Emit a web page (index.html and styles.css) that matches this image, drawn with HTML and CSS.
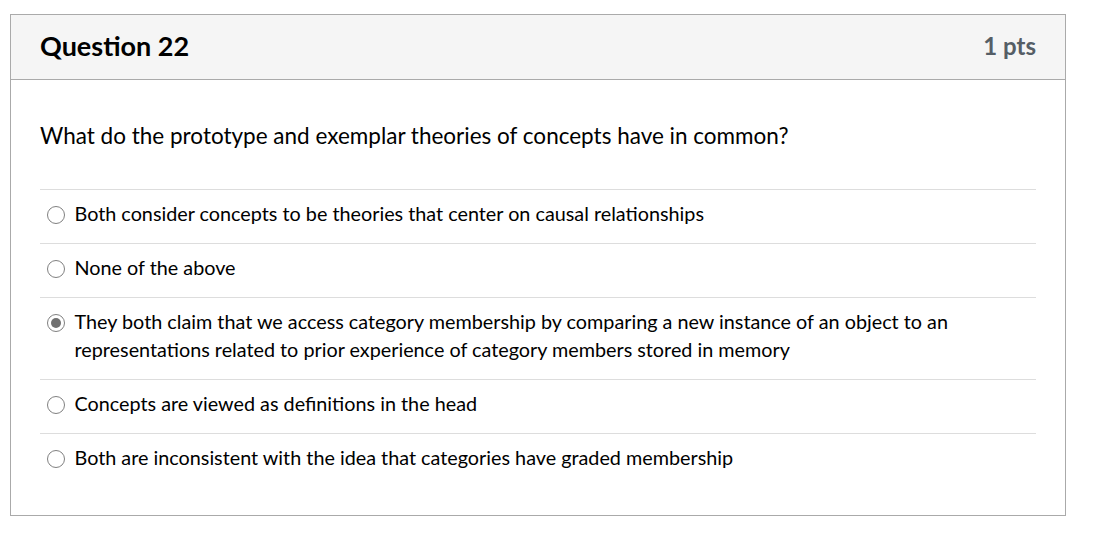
FILE: index.html
```html
<!DOCTYPE html>
<html>
<head>
<meta charset="utf-8">
<link rel="stylesheet" href="styles.css">
</head>
<body>
<div class="question">
  <div class="q-header">
    <div class="q-title">Question 22</div>
    <div class="q-pts">1 pts</div>
  </div>
  <div class="q-body">
    <div class="q-text">What do the prototype and exemplar theories of concepts have in common?</div>
    <div class="answers">
      <div class="answer"><span class="radio"></span><span class="label">Both consider concepts to be theories that center on causal relationships</span></div>
      <div class="answer"><span class="radio"></span><span class="label">None of the above</span></div>
      <div class="answer"><span class="radio checked"></span><span class="label">They both claim that we access category membership by comparing a new instance of an object to an representations related to prior experience of category members stored in memory</span></div>
      <div class="answer"><span class="radio"></span><span class="label">Concepts are viewed as definitions in the head</span></div>
      <div class="answer"><span class="radio"></span><span class="label">Both are inconsistent with the idea that categories have graded membership</span></div>
    </div>
  </div>
</div>
</body>
</html>
```

FILE: styles.css
```css
html, body {
  margin: 0;
  padding: 0;
  background: #fff;
}
body {
  font-family: Lato, "Liberation Sans", sans-serif;
  color: #2d3b45;
  padding: 14px 0 0 10px;
}
.question {
  width: 1054px;
  border: 1px solid #aaaaaa;
  background: #fff;
}
.q-header {
  height: 64px;
  background: #f5f5f5;
  border-bottom: 1px solid #aaaaaa;
  display: flex;
  align-items: center;
  justify-content: space-between;
  padding: 0 29px 3px 29px;
  box-sizing: border-box;
  height: 65px;
}
.q-title {
  font-size: 27px;
  font-weight: 700;
  color: #000;
}
.q-pts {
  font-size: 24px;
  font-weight: 700;
  color: #555e66;
}
.q-body {
  padding: 42px 29px 28px 29px;
}
.q-text {
  font-size: 22.5px;
  line-height: 28px;
  color: #000;
  margin-bottom: 39px;
}
.answer {
  display: flex;
  align-items: flex-start;
  border-top: 1px solid #dddddd;
  padding: 9px 0 16px 0;
}
.radio {
  flex: none;
  width: 16px;
  height: 16px;
  border: 1.5px solid #808080;
  border-radius: 50%;
  margin: 7px 10px 0 6.5px;
  background: #fff;
  position: relative;
}
.radio.checked::after {
  content: "";
  position: absolute;
  left: 3px;
  top: 3px;
  width: 10px;
  height: 10px;
  border-radius: 50%;
  background: #707070;
}
.label {
  font-size: 19.8px;
  line-height: 28px;
  color: #000;
}
```
